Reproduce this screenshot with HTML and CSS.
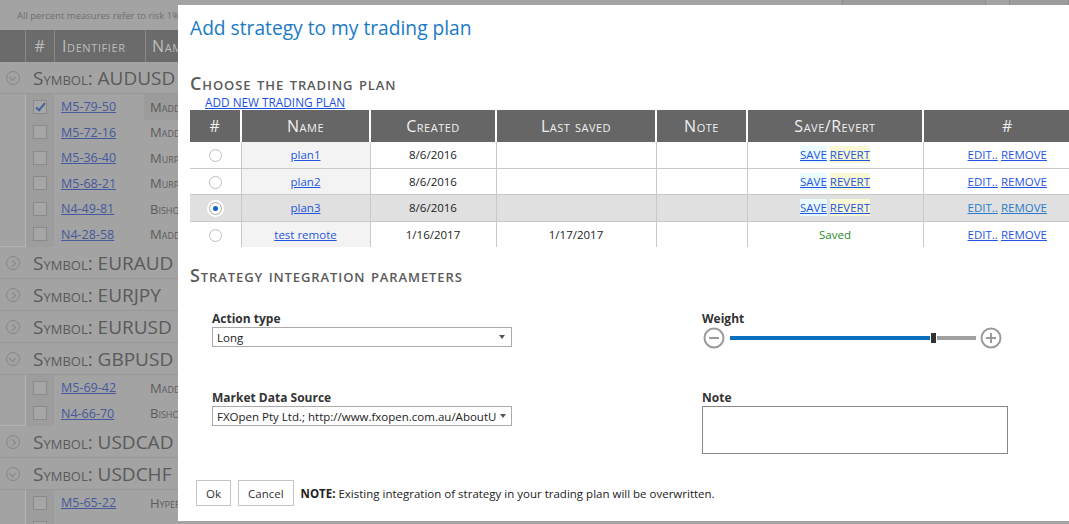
FILE: index.html
```html
<!DOCTYPE html>
<html lang="en">
<head>
    <meta charset="UTF-8">
    <title>Add strategy to my trading plan</title>
    <link rel="stylesheet" href="styles.css">
</head>
<body>

    <div class="page">
        <div class="page-top">
            <p class="page-note">All percent measures refer to risk 1%</p>
            <div class="page-tools"><span class="tool tool-wide"></span><span class="tool"></span></div>
        </div>

        <div class="grid-head">
            <span class="gutter"></span>
            <span class="col-num">#</span>
            <span class="col-ident">Identifier</span>
            <span class="col-name">Name</span>
        </div>

        <div class="symbol"><span class="toggle open"></span>Symbol: AUDUSD</div>
        <div class="items">
            <div class="items-gutter"></div>
            <div class="items-list">
                <div class="item selected"><span class="col-num"><span class="check checked"></span></span><span class="col-ident"><a href="#">M5-79-50</a></span><span class="col-name">Maddox</span></div>
                <div class="item"><span class="col-num"><span class="check"></span></span><span class="col-ident"><a href="#">M5-72-16</a></span><span class="col-name">Maddox</span></div>
                <div class="item"><span class="col-num"><span class="check"></span></span><span class="col-ident"><a href="#">M5-36-40</a></span><span class="col-name">Murphy</span></div>
                <div class="item"><span class="col-num"><span class="check"></span></span><span class="col-ident"><a href="#">M5-68-21</a></span><span class="col-name">Murphy</span></div>
                <div class="item"><span class="col-num"><span class="check"></span></span><span class="col-ident"><a href="#">N4-49-81</a></span><span class="col-name">Bishop</span></div>
                <div class="item"><span class="col-num"><span class="check"></span></span><span class="col-ident"><a href="#">N4-28-58</a></span><span class="col-name">Maddox</span></div>
            </div>
        </div>
        <div class="symbol"><span class="toggle"></span>Symbol: EURAUD</div>
        <div class="symbol"><span class="toggle"></span>Symbol: EURJPY</div>
        <div class="symbol"><span class="toggle"></span>Symbol: EURUSD</div>
        <div class="symbol"><span class="toggle open"></span>Symbol: GBPUSD</div>
        <div class="items">
            <div class="items-gutter"></div>
            <div class="items-list">
                <div class="item"><span class="col-num"><span class="check"></span></span><span class="col-ident"><a href="#">M5-69-42</a></span><span class="col-name">Maddox</span></div>
                <div class="item"><span class="col-num"><span class="check"></span></span><span class="col-ident"><a href="#">N4-66-70</a></span><span class="col-name">Bishop</span></div>
            </div>
        </div>
        <div class="symbol"><span class="toggle"></span>Symbol: USDCAD</div>
        <div class="symbol"><span class="toggle open"></span>Symbol: USDCHF</div>
        <div class="items">
            <div class="items-gutter"></div>
            <div class="items-list">
                <div class="item"><span class="col-num"><span class="check"></span></span><span class="col-ident"><a href="#">M5-65-22</a></span><span class="col-name">Hyperion</span></div>
                <div class="item"><span class="col-num"><span class="check"></span></span><span class="col-ident"></span><span class="col-name"></span></div>
            </div>
        </div>
    </div>

    <div class="dialog">
        <h1 class="dialog-title">Add strategy to my trading plan</h1>

        <h2 class="section-title">Choose the trading plan</h2>
        <a class="add-plan" href="#">ADD NEW TRADING PLAN</a>

        <table class="plans">
            <colgroup>
                <col style="width: 51px">
                <col style="width: 129px">
                <col style="width: 126px">
                <col style="width: 160px">
                <col style="width: 91px">
                <col style="width: 176px">
                <col style="width: 168px">
            </colgroup>
            <thead>
                <tr>
                    <th>#</th>
                    <th>Name</th>
                    <th>Created</th>
                    <th>Last saved</th>
                    <th>Note</th>
                    <th>Save/Revert</th>
                    <th>#</th>
                </tr>
            </thead>
            <tbody>
                <tr>
                    <td class="pick"><span class="radio"></span></td>
                    <td class="plan-name"><a href="#">plan1</a></td>
                    <td>8/6/2016</td>
                    <td></td>
                    <td></td>
                    <td><a class="save" href="#">SAVE</a> <a class="revert" href="#">REVERT</a></td>
                    <td class="actions"><a href="#">EDIT..</a> <a href="#">REMOVE</a></td>
                </tr>
                <tr>
                    <td class="pick"><span class="radio"></span></td>
                    <td class="plan-name"><a href="#">plan2</a></td>
                    <td>8/6/2016</td>
                    <td></td>
                    <td></td>
                    <td><a class="save" href="#">SAVE</a> <a class="revert" href="#">REVERT</a></td>
                    <td class="actions"><a href="#">EDIT..</a> <a href="#">REMOVE</a></td>
                </tr>
                <tr class="current">
                    <td class="pick"><span class="radio checked"></span></td>
                    <td class="plan-name"><a href="#">plan3</a></td>
                    <td>8/6/2016</td>
                    <td></td>
                    <td></td>
                    <td><a class="save" href="#">SAVE</a> <a class="revert" href="#">REVERT</a></td>
                    <td class="actions"><a href="#">EDIT..</a> <a href="#">REMOVE</a></td>
                </tr>
                <tr>
                    <td class="pick"><span class="radio"></span></td>
                    <td class="plan-name"><a href="#">test remote</a></td>
                    <td>1/16/2017</td>
                    <td>1/17/2017</td>
                    <td></td>
                    <td><span class="saved">Saved</span></td>
                    <td class="actions"><a href="#">EDIT..</a> <a href="#">REMOVE</a></td>
                </tr>
            </tbody>
        </table>

        <h2 class="section-title params-title">Strategy integration parameters</h2>

        <div class="params">
            <div class="field">
                <label class="field-label">Action type</label>
                <div class="select"><span>Long</span><span class="arrow"></span></div>
            </div>
            <div class="field">
                <label class="field-label">Weight</label>
                <div class="slider">
                    <svg class="step" width="22" height="22" viewBox="0 0 22 22">
                        <circle cx="11" cy="11" r="9.5" fill="none" stroke="#9a9a9a" stroke-width="2"/>
                        <line x1="6" y1="11" x2="16" y2="11" stroke="#9a9a9a" stroke-width="2"/>
                    </svg>
                    <div class="track">
                        <span class="track-fill"></span>
                        <span class="thumb"></span>
                        <span class="track-rest"></span>
                    </div>
                    <svg class="step" width="22" height="22" viewBox="0 0 22 22">
                        <circle cx="11" cy="11" r="9.5" fill="none" stroke="#9a9a9a" stroke-width="2"/>
                        <line x1="6" y1="11" x2="16" y2="11" stroke="#9a9a9a" stroke-width="2"/>
                        <line x1="11" y1="6" x2="11" y2="16" stroke="#9a9a9a" stroke-width="2"/>
                    </svg>
                </div>
            </div>
            <div class="field">
                <label class="field-label">Market Data Source</label>
                <div class="select"><span>FXOpen Pty Ltd.; http://www.fxopen.com.au/AboutU</span><span class="arrow"></span></div>
            </div>
            <div class="field">
                <label class="field-label">Note</label>
                <textarea class="note"></textarea>
            </div>
        </div>

        <div class="footer">
            <button type="button" class="btn">Ok</button>
            <button type="button" class="btn">Cancel</button>
            <p class="footer-note"><b>NOTE:</b> Existing integration of strategy in your trading plan will be overwritten.</p>
        </div>
    </div>

</body>
</html>
```

FILE: styles.css
```css
body {
    font-family: 'Open Sans', 'Noto Sans', sans-serif;
    margin: 0;
    padding: 0;
    background-color: #a3a3a3;
    color: #333;
    overflow: hidden;
    width: 1069px;
    height: 524px;
    position: relative;
}

/* dimmed page behind the dialog */

.page {
    color: #5c5c5c;
}

.page-top {
    display: flex;
    justify-content: space-between;
    height: 30px;
}

.page-note {
    margin: 9px 0 0 17px;
    font-size: 9.5px;
    color: #6f6f6f;
    white-space: nowrap;
}

.page-tools {
    display: flex;
    gap: 23px;
    margin-top: -20px;
}

.tool {
    display: block;
    width: 58px;
    height: 25px;
    border: 1px solid #8c8c8c;
    background-color: #9c9c9c;
}

.tool-wide {
    width: 142px;
}

.grid-head {
    display: flex;
    height: 32px;
    background-color: #6b6b6b;
    color: #bdbdbd;
    font-size: 16px;
    letter-spacing: 0.6px;
    font-variant: small-caps;
    line-height: 32px;
}

.grid-head span {
    border-right: 1px solid #8a8a8a;
}

.gutter {
    width: 25px;
}

.col-num {
    width: 28px;
    text-align: center;
    flex: none;
}

.col-ident {
    width: 83px;
    padding-left: 7px;
    flex: none;
}

.col-name {
    flex: 1;
    padding-left: 6px;
}

.symbol {
    display: flex;
    align-items: center;
    height: 31px;
    border-bottom: 1px solid #979797;
    font-size: 19px;
    font-variant: small-caps;
    color: #5a5a5a;
}

.toggle {
    display: inline-block;
    width: 12px;
    height: 12px;
    margin: 0 13px 0 6px;
    border: 1px solid #868686;
    border-radius: 50%;
    position: relative;
}

.toggle::after {
    content: "";
    position: absolute;
    left: 3px;
    top: 4px;
    width: 4px;
    height: 4px;
    border-top: 1px solid #868686;
    border-right: 1px solid #868686;
    transform: rotate(45deg);
}

.toggle.open::after {
    left: 3px;
    top: 3px;
    transform: rotate(135deg);
}

.items {
    display: flex;
}

.items-gutter {
    width: 25px;
    border-right: 1px solid #b3b3b3;
    border-bottom: 1px solid #b3b3b3;
}

.items-list {
    flex: 1;
}

.item {
    display: flex;
    height: 25.5px;
    align-items: center;
    font-size: 12.5px;
}

.item .col-num {
    align-self: stretch;
    display: flex;
    align-items: center;
    justify-content: center;
    background-color: #9d9d9d;
}

.item .col-ident a {
    color: #44599e;
}

.item .col-name {
    font-variant: small-caps;
    font-size: 13px;
    align-self: stretch;
    display: flex;
    align-items: center;
}

.item.selected .col-name {
    background-color: #9b9b9b;
}

.check {
    display: block;
    width: 12px;
    height: 12px;
    border: 1px solid #8a8a8a;
    background-color: #a6a6a6;
    position: relative;
}

.check.checked::after {
    content: "";
    position: absolute;
    left: 4px;
    top: 0;
    width: 3px;
    height: 8px;
    border-right: 2px solid #42619a;
    border-bottom: 2px solid #42619a;
    transform: rotate(40deg);
}

/* dialog */

.dialog {
    position: absolute;
    left: 178px;
    top: 5px;
    width: 920px;
    height: 516px;
    box-sizing: border-box;
    padding: 0 0 0 12px;
    background-color: #fff;
    display: flex;
    flex-direction: column;
    align-items: flex-start;
}

.dialog-title {
    margin: 8px 0 0;
    font-size: 19.2px;
    line-height: 30px;
    font-weight: normal;
    color: #1a7ac6;
}

.section-title {
    margin: 29px 0 0;
    font-size: 18px;
    line-height: 22px;
    letter-spacing: 0.9px;
    font-weight: 600;
    font-variant: small-caps;
    color: #5a5a5a;
}

.add-plan {
    margin-left: 15px;
    font-size: 11.8px;
    line-height: 16px;
    color: #1a4fe0;
}

.plans {
    width: 901px;
    table-layout: fixed;
    border-collapse: collapse;
    font-size: 11.5px;
}

.plans th {
    height: 32px;
    padding: 0;
    background-color: #666;
    color: #f0f0f0;
    font-weight: normal;
    font-size: 16px;
    letter-spacing: 0.5px;
    font-variant: small-caps;
    border-left: 2px solid #fff;
}

.plans th:first-child {
    border-left: none;
}

.plans td {
    height: 25.5px;
    padding: 0;
    text-align: center;
    color: #222;
    border-bottom: 1px solid #c9c9c9;
    border-left: 1px solid #c9c9c9;
}

.plans td:first-child {
    border-left: none;
}

.plans tr:last-child td {
    border-bottom: none;
}

.plans td.plan-name {
    background-color: #f3f3f3;
}

.plans tr.current td {
    background-color: #e0e0e0;
}

.plans a {
    color: #1f55e0;
}

.plans tr.current .actions a {
    color: #2a7bcc;
}

.save {
    background-color: #e9fbff;
    padding: 1px 0;
}

.revert {
    background-color: #f8f8d4;
    padding: 1px 0;
}

.saved {
    color: #2a8a2a;
}

.radio {
    display: inline-block;
    width: 11px;
    height: 11px;
    border: 1px solid #bdbdbd;
    border-radius: 50%;
    vertical-align: middle;
    position: relative;
}

.radio.checked {
    border-color: #a8a8a8;
    box-shadow: 0 0 0 2px #fff;
    background-color: #fff;
}

.radio.checked::after {
    content: "";
    position: absolute;
    left: 3px;
    top: 3px;
    width: 5px;
    height: 5px;
    border-radius: 50%;
    background-color: #0b66c4;
}

.params-title {
    margin-top: 17px;
}

.params {
    display: grid;
    grid-template-columns: 490px 306px;
    row-gap: 41px;
    margin: 25px 0 0 22px;
}

.field {
    display: flex;
    flex-direction: column;
    align-items: flex-start;
}

.field-label {
    font-size: 12px;
    line-height: 16px;
    font-weight: bold;
    color: #333;
}

.select {
    display: flex;
    align-items: center;
    justify-content: space-between;
    box-sizing: border-box;
    width: 300px;
    height: 20px;
    padding: 0 6px 0 4px;
    border: 1px solid #aaa;
    font-size: 11.5px;
    color: #222;
    white-space: nowrap;
    overflow: hidden;
}

.arrow {
    flex: none;
    margin-left: 4px;
    border-left: 3px solid transparent;
    border-right: 3px solid transparent;
    border-top: 4px solid #555;
}

.slider {
    display: flex;
    align-items: center;
    height: 22px;
    margin-left: 1px;
}

.track {
    display: flex;
    align-items: center;
    width: 246px;
    margin: 0 4px 0 5px;
}

.track-fill {
    width: 201px;
    height: 4px;
    background-color: #0a6ebf;
}

.thumb {
    width: 5px;
    height: 10px;
    background-color: #333;
    margin: 0 1px;
}

.track-rest {
    width: 39px;
    height: 4px;
    background-color: #a0a0a0;
}

.note {
    box-sizing: border-box;
    width: 306px;
    height: 48px;
    margin: 0;
    border: 1px solid #888;
    resize: none;
}

.footer {
    display: flex;
    align-items: center;
    gap: 7px;
    margin: 26px 0 0 6px;
}

.btn {
    height: 26px;
    padding: 0 9px;
    background-color: #fff;
    border: 1px solid #c4c4c4;
    font-family: inherit;
    font-size: 11.5px;
    color: #333;
}

.footer-note {
    margin: 0;
    font-size: 11.5px;
    color: #222;
}
```
